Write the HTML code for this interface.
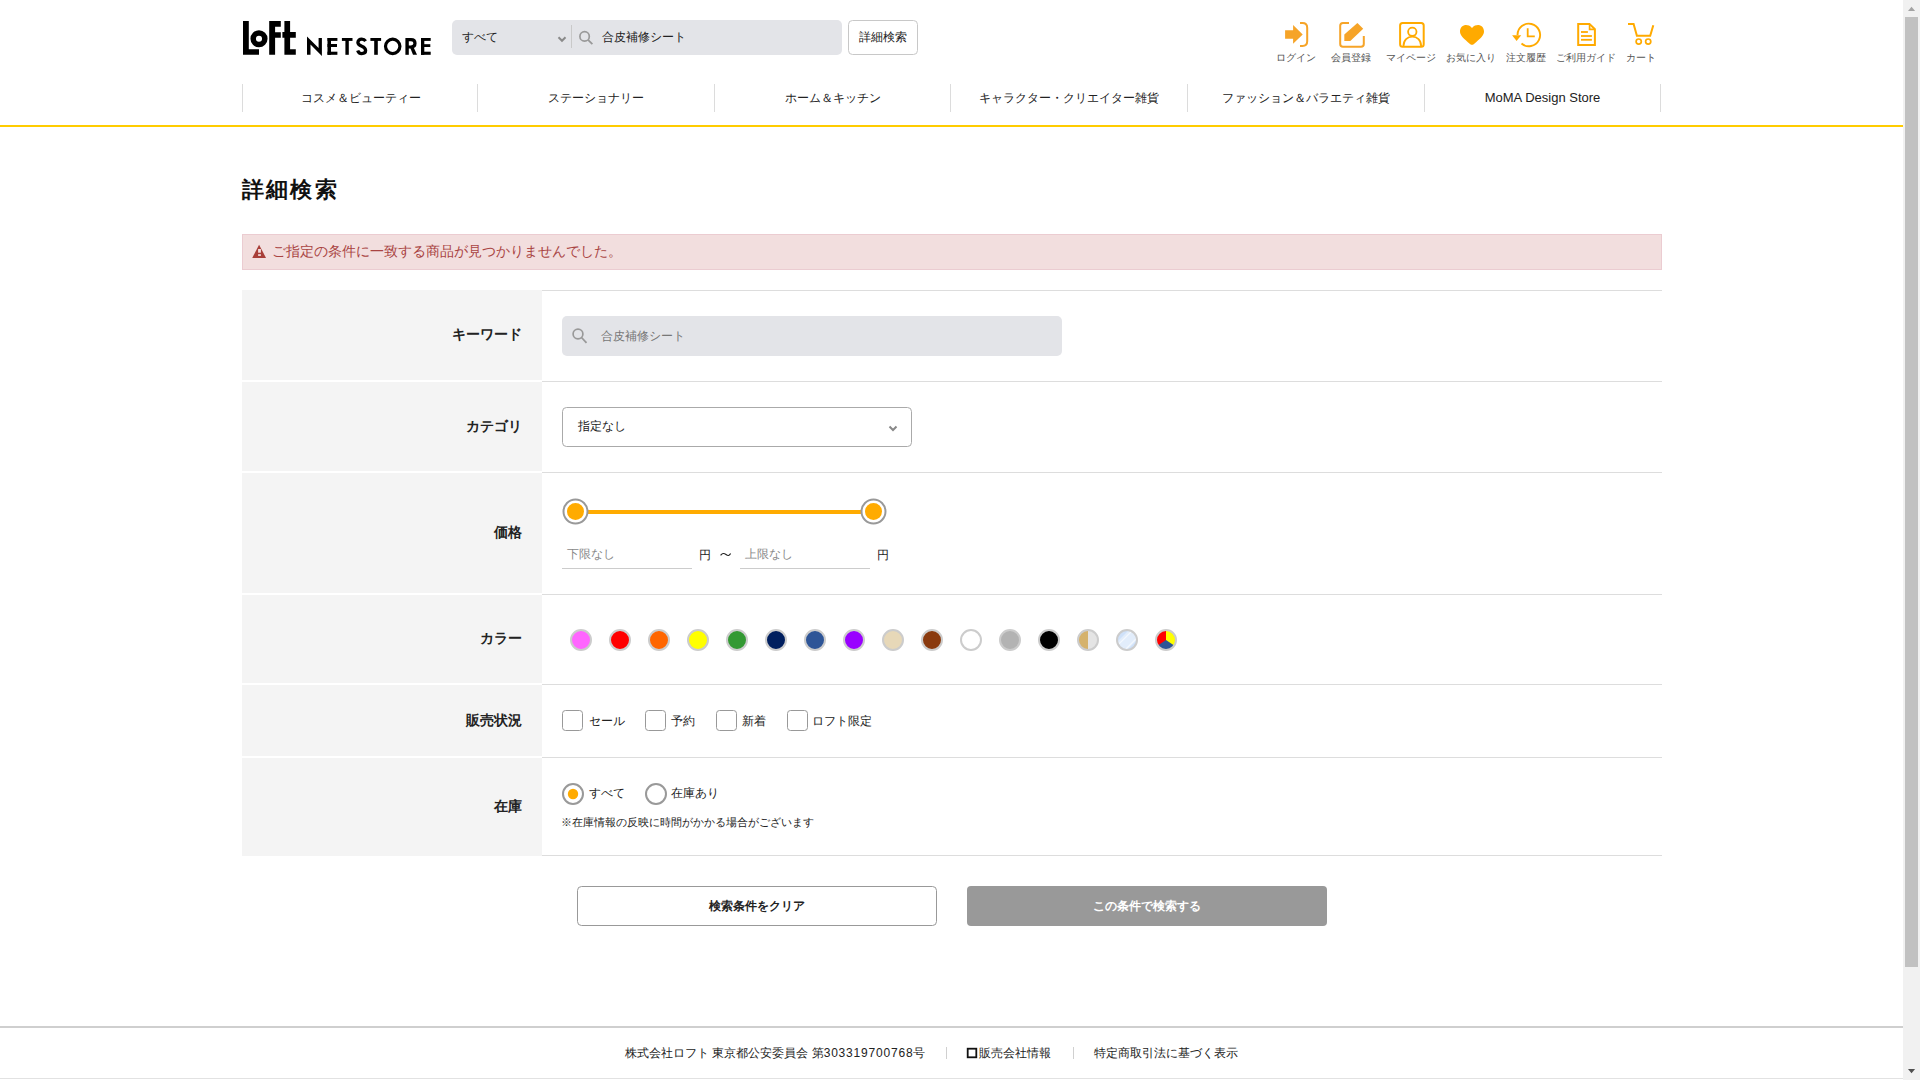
<!DOCTYPE html>
<html lang="ja">
<head>
<meta charset="utf-8">
<title>詳細検索 | ロフト公式通販サイト</title>
<style>
html,body{margin:0;padding:0;width:1920px;height:1080px;overflow:hidden;background:#fff;}
body{font-family:"Liberation Sans",sans-serif;color:#222;position:relative;}
svg.bg{position:absolute;left:0;top:0;}
.t{position:absolute;white-space:nowrap;line-height:20px;height:20px;}
.c{text-align:center;}
.r{text-align:right;}
.b{font-weight:bold;}
</style>
</head>
<body>
<svg class="bg" width="1920" height="1080" viewBox="0 0 1920 1080">
  <!-- ===== Logo ===== -->
  <g fill="#000">
    <polygon points="243,21.1 248.8,21.1 248.8,49.2 259,49.2 259,54.7 243,54.7"/>
    <circle cx="259" cy="38.8" r="5.8" fill="none" stroke="#000" stroke-width="5.5"/>
    <polygon points="269.2,21.1 280.8,21.1 280.8,26.8 275.1,26.8 275.1,32.3 280.8,32.3 280.8,37.8 275.1,37.8 275.1,54.7 269.2,54.7"/>
    <polygon points="284.4,21.1 290.1,21.1 290.1,32.1 295.8,32.1 295.8,37.8 290.1,37.8 290.1,49.2 295.8,49.2 295.8,54.7 284.4,54.7 284.4,37.8 282.4,37.8 282.4,32.1 284.4,32.1"/>
    <!-- NETSTORE -->
    <polygon points="307,54.8 307,36.4 318.6,47.9 318.6,38 321.9,38 321.9,55.9 310.5,44.6 310.5,54.8"/>
    <rect x="327.5" y="38" width="3.5" height="16.8"/>
    <rect x="327.5" y="38" width="9.9" height="2.9"/>
    <rect x="327.5" y="44" width="9.5" height="3"/>
    <rect x="327.5" y="51.7" width="9.9" height="3.1"/>
    <rect x="341.9" y="38" width="10.6" height="2.9"/>
    <rect x="345.4" y="38" width="3.4" height="16.8"/>
    <path d="M365.6,41.2 C364.6,39.6 363.2,39.1 361.7,39.1 C359.6,39.1 357.9,40.5 357.9,42.5 C357.9,44.6 359.6,45.3 361.8,46.2 C364.3,47.2 365.6,48.4 365.6,50.6 C365.6,52.7 363.8,53.6 361.7,53.6 C359.7,53.6 358.3,52.4 357.7,50.5" fill="none" stroke="#000" stroke-width="3.3"/>
    <rect x="370.4" y="38" width="10.7" height="2.9"/>
    <rect x="374.2" y="38" width="3.6" height="16.8"/>
    <circle cx="392.7" cy="46.35" r="7.2" fill="none" stroke="#000" stroke-width="3.2"/>
    <rect x="405.4" y="38" width="3.4" height="16.8"/>
    <path d="M406,39.6 L411,39.6 C413.4,39.6 415,40.9 415,43.3 C415,45.7 413.4,47 411,47 L406,47" fill="none" stroke="#000" stroke-width="3.2"/>
    <polygon points="409.5,46 413,46 417,54.8 413,54.8"/>
    <rect x="421" y="38" width="3.3" height="16.8"/>
    <rect x="421" y="38" width="9.7" height="2.9"/>
    <rect x="421" y="44.2" width="9.3" height="2.8"/>
    <rect x="421" y="51.7" width="9.7" height="3.1"/>
  </g>

  <!-- ===== Header search ===== -->
  <rect x="452" y="20" width="390" height="35" rx="5" fill="#e3e4e8"/>
  <polyline points="558.5,37.3 562,40.8 565.5,37.3" fill="none" stroke="#8a8a8a" stroke-width="2"/>
  <rect x="571" y="25" width="1" height="23" fill="#c9c9c9"/>
  <circle cx="584.6" cy="36.4" r="4.7" fill="none" stroke="#999" stroke-width="1.7"/>
  <line x1="588" y1="39.8" x2="592.4" y2="44.2" stroke="#999" stroke-width="1.8"/>
  <rect x="848.5" y="20.5" width="69" height="34" rx="4" fill="#fff" stroke="#c8c8c8"/>

  <!-- ===== Header icons ===== -->
  <g fill="#f6a428">
    <polygon points="1285.1,30.2 1293.1,30.2 1293.1,25.1 1302.7,34.5 1293.1,43.8 1293.1,38.7 1285.1,38.7"/>
  </g>
  <path d="M1300,23 L1302.5,23 Q1307.2,23 1307.2,27.7 L1307.2,41.2 Q1307.2,45.9 1302.5,45.9 L1300,45.9" fill="none" stroke="#f6a428" stroke-width="2"/>
  <path d="M1349,23 L1343,23 Q1340.2,23 1340.2,25.8 L1340.2,44 Q1340.2,46.8 1343,46.8 L1361,46.8 Q1363.8,46.8 1363.8,44 L1363.8,36" fill="none" stroke="#f6a428" stroke-width="2"/>
  <polygon points="1344.3,34.4 1357.4,23.1 1363.2,28.7 1350.3,40.9 1344.3,40.9" fill="#f6a428"/>
  <rect x="1400.1" y="23" width="23.6" height="23.8" rx="2.5" fill="none" stroke="#ffaa00" stroke-width="2"/>
  <circle cx="1412.3" cy="31.8" r="4.2" fill="none" stroke="#ffaa00" stroke-width="1.8"/>
  <path d="M1403.5,46 C1403.5,40 1407.5,36.6 1412.3,36.6 C1417.1,36.6 1421.1,40 1421.1,46" fill="none" stroke="#ffaa00" stroke-width="1.8"/>
  <path d="M1472,28 C1470,25.3 1467.5,24.8 1465.5,24.9 C1462.2,25.2 1460,28 1460,31.5 C1460,35.5 1463.5,38.5 1470.3,44.2 C1471.3,45 1472.7,45 1473.7,44.2 C1480.5,38.5 1484,35.5 1484,31.5 C1484,28 1481.8,25.2 1478.5,24.9 C1476.5,24.8 1474,25.3 1472,28 Z" fill="#ffaa00"/>
  <path d="M1517.5,34.9 A11.3,11.3 0 1 1 1521.5,43.6" fill="none" stroke="#ffaa00" stroke-width="1.9"/>
  <polygon points="1512.1,35.3 1521.2,35.3 1516.6,40.9" fill="#ffaa00"/>
  <path d="M1527.7,28.2 L1527.7,36.3 L1534.8,36.3" fill="none" stroke="#ffaa00" stroke-width="1.8"/>
  <path d="M1578.2,23.9 L1589.5,23.9 L1594.9,29.2 L1594.9,45 L1578.2,45 Z" fill="none" stroke="#ffaa00" stroke-width="2"/>
  <path d="M1589.6,24 L1589.6,29.4 L1595,29.4" fill="none" stroke="#ffaa00" stroke-width="1.7"/>
  <g fill="#ffaa00">
    <rect x="1581" y="31.1" width="6.9" height="1.8"/>
    <rect x="1581" y="35.1" width="10.9" height="1.8"/>
    <rect x="1581" y="38.9" width="10.9" height="1.8"/>
  </g>
  <path d="M1628,24 L1633.6,24 L1636.9,35.8 L1650.2,35.8 L1653.3,25.3" fill="none" stroke="#ffaa00" stroke-width="2"/>
  <circle cx="1638.7" cy="41.6" r="2.6" fill="none" stroke="#ffaa00" stroke-width="1.7"/>
  <circle cx="1648.2" cy="41.6" r="2.6" fill="none" stroke="#ffaa00" stroke-width="1.7"/>

  <!-- ===== Nav ===== -->
  <g fill="#dcdcdc">
    <rect x="242" y="84" width="1" height="28"/>
    <rect x="477" y="84" width="1" height="28"/>
    <rect x="714" y="84" width="1" height="28"/>
    <rect x="950" y="84" width="1" height="28"/>
    <rect x="1187" y="84" width="1" height="28"/>
    <rect x="1424" y="84" width="1" height="28"/>
    <rect x="1660" y="84" width="1" height="28"/>
  </g>
  <rect x="0" y="125" width="1903" height="2" fill="#ffcc00"/>

  <!-- ===== Alert ===== -->
  <rect x="242.5" y="234.5" width="1419" height="35" fill="#f2dede" stroke="#ebccd1"/>
  <path d="M259.1,244.8 L266,257.9 L252.25,257.9 Z" fill="#a83e38"/>
  <rect x="258.1" y="249" width="2.8" height="3.7" fill="#f2dede"/>
  <rect x="258.1" y="254.2" width="2.8" height="1.7" fill="#f2dede"/>

  <!-- ===== Table ===== -->
  <g fill="#f4f4f4">
    <rect x="242" y="290" width="300" height="90"/>
    <rect x="242" y="382" width="300" height="89"/>
    <rect x="242" y="473" width="300" height="120"/>
    <rect x="242" y="595" width="300" height="88"/>
    <rect x="242" y="685" width="300" height="71"/>
    <rect x="242" y="758" width="300" height="98"/>
  </g>
  <g fill="#dddddd">
    <rect x="542" y="290" width="1120" height="1"/>
    <rect x="542" y="381" width="1120" height="1"/>
    <rect x="542" y="472" width="1120" height="1"/>
    <rect x="542" y="594" width="1120" height="1"/>
    <rect x="542" y="684" width="1120" height="1"/>
    <rect x="542" y="757" width="1120" height="1"/>
    <rect x="542" y="855" width="1120" height="1"/>
  </g>

  <!-- keyword -->
  <rect x="562" y="316" width="500" height="40" rx="5" fill="#e3e4e8"/>
  <circle cx="578" cy="334" r="4.9" fill="none" stroke="#999" stroke-width="1.7"/>
  <line x1="581.5" y1="337.5" x2="586.5" y2="342.8" stroke="#999" stroke-width="1.8"/>

  <!-- category -->
  <rect x="562.5" y="407.5" width="349" height="39" rx="4" fill="#fff" stroke="#aaa"/>
  <polyline points="889.5,426.5 893,430 896.5,426.5" fill="none" stroke="#888" stroke-width="2"/>

  <!-- price slider -->
  <rect x="575" y="510" width="298" height="4" fill="#ffab00"/>
  <circle cx="575.5" cy="511.5" r="12" fill="#fff" stroke="#999" stroke-width="2"/>
  <circle cx="575.5" cy="511.5" r="8.5" fill="#ffab00"/>
  <circle cx="873.5" cy="511.5" r="12" fill="#fff" stroke="#999" stroke-width="2"/>
  <circle cx="873.5" cy="511.5" r="8.5" fill="#ffab00"/>
  <path d="M720.6,555.4 C722,553.2 724,552.9 726,554.5 C727.9,556 729.4,555.9 730.6,553.6" fill="none" stroke="#222" stroke-width="1.15"/>
  <rect x="562" y="568" width="130" height="1" fill="#ccc"/>
  <rect x="740" y="568" width="130" height="1" fill="#ccc"/>

  <!-- colors -->
  <g stroke="#cccccc" stroke-width="2">
    <circle cx="581" cy="640" r="10" fill="#ff66ff"/>
    <circle cx="620" cy="640" r="10" fill="#ff0000"/>
    <circle cx="659" cy="640" r="10" fill="#ff6600"/>
    <circle cx="698" cy="640" r="10" fill="#ffff00"/>
    <circle cx="737" cy="640" r="10" fill="#339933"/>
    <circle cx="776" cy="640" r="10" fill="#001f5f"/>
    <circle cx="815" cy="640" r="10" fill="#2e5597"/>
    <circle cx="854" cy="640" r="10" fill="#9900ff"/>
    <circle cx="893" cy="640" r="10" fill="#e7d8b8"/>
    <circle cx="932" cy="640" r="10" fill="#8a3a0e"/>
    <circle cx="971" cy="640" r="10" fill="#ffffff"/>
    <circle cx="1010" cy="640" r="10" fill="#b3b3b3"/>
    <circle cx="1049" cy="640" r="10" fill="#000000"/>
  </g>
  <defs>
    <clipPath id="c14"><circle cx="1088" cy="640" r="10"/></clipPath>
    <clipPath id="c15"><circle cx="1127" cy="640" r="10"/></clipPath>
    <clipPath id="c16"><circle cx="1166" cy="640" r="10"/></clipPath>
  </defs>
  <g clip-path="url(#c14)">
    <rect x="1076" y="628" width="12" height="24" fill="#d5b26c"/>
    <rect x="1088" y="628" width="12" height="24" fill="#e4e4e4"/>
  </g>
  <circle cx="1088" cy="640" r="10" fill="none" stroke="#ccc" stroke-width="2"/>
  <g clip-path="url(#c15)">
    <rect x="1115" y="628" width="24" height="24" fill="#cfe1f9"/>
    <polygon points="1113,646 1131,628 1141,628 1141,636 1125,652 1119,652" fill="#e2edfb"/>
    <polygon points="1116,646 1133,629 1134.2,629.6 1117.2,646.6" fill="#f3f8fe"/>
    <polygon points="1124,650 1140,634 1140.8,635 1124.8,651" fill="#f3f8fe"/>
  </g>
  <circle cx="1127" cy="640" r="10" fill="none" stroke="#ccc" stroke-width="2"/>
  <g clip-path="url(#c16)">
    <rect x="1154" y="628" width="24" height="24" fill="#2e5597"/>
    <polygon points="1166,640 1166,628 1154,628 1154,648" fill="#ff0000"/>
    <polygon points="1166,640 1166,628 1178,628 1178,648" fill="#ffff00"/>
  </g>
  <circle cx="1166" cy="640" r="10" fill="none" stroke="#ccc" stroke-width="2"/>

  <!-- checkboxes -->
  <g fill="#fff" stroke="#999" stroke-width="1">
    <rect x="562.5" y="710.5" width="20" height="20" rx="3"/>
    <rect x="645.5" y="710.5" width="20" height="20" rx="3"/>
    <rect x="716.5" y="710.5" width="20" height="20" rx="3"/>
    <rect x="787.5" y="710.5" width="20" height="20" rx="3"/>
  </g>

  <!-- radios -->
  <circle cx="573" cy="794" r="10" fill="#fff" stroke="#999" stroke-width="2"/>
  <circle cx="573" cy="794" r="5.2" fill="#ffab00"/>
  <circle cx="656" cy="794" r="10" fill="#fff" stroke="#999" stroke-width="2"/>

  <!-- buttons -->
  <rect x="577.5" y="886.5" width="359" height="39" rx="4" fill="#fff" stroke="#999"/>
  <rect x="967" y="886" width="360" height="40" rx="4" fill="#999"/>

  <!-- footer -->
  <rect x="0" y="1026" width="1903" height="2" fill="#cfcfcf"/>
  <rect x="0" y="1078" width="1903" height="1" fill="#e2e2e2"/>
  <rect x="946" y="1047" width="1" height="12" fill="#d0d0d0"/>
  <rect x="1073" y="1047" width="1" height="12" fill="#d0d0d0"/>
  <rect x="967.7" y="1048.7" width="8.6" height="8.6" fill="none" stroke="#111" stroke-width="1.8"/>

  <!-- scrollbar -->
  <rect x="1903" y="0" width="17" height="1080" fill="#f1f1f1"/>
  <rect x="1905" y="17" width="13" height="950" fill="#c1c1c1"/>
  <polygon points="1908,11.1 1915.1,11.1 1911.55,6.7" fill="#a3a3a3"/>
  <polygon points="1908,1068.9 1915.1,1068.9 1911.55,1073.3" fill="#505050"/>
</svg>

<!-- ===== Header texts ===== -->
<div class="t" style="left:462px;top:27px;font-size:12px;">すべて</div>
<div class="t" style="left:602px;top:27px;font-size:12px;">合皮補修シート</div>
<div class="t c" style="left:848px;top:27px;width:70px;font-size:12px;">詳細検索</div>

<div class="t c" style="left:1256px;top:48px;width:80px;font-size:10px;color:#555;">ログイン</div>
<div class="t c" style="left:1311px;top:48px;width:80px;font-size:10px;color:#555;">会員登録</div>
<div class="t c" style="left:1371px;top:48px;width:80px;font-size:10px;color:#555;">マイページ</div>
<div class="t c" style="left:1431px;top:48px;width:80px;font-size:10px;color:#555;">お気に入り</div>
<div class="t c" style="left:1486px;top:48px;width:80px;font-size:10px;color:#555;">注文履歴</div>
<div class="t c" style="left:1546px;top:48px;width:80px;font-size:10px;color:#555;">ご利用ガイド</div>
<div class="t c" style="left:1601px;top:48px;width:80px;font-size:10px;color:#555;">カート</div>

<div class="t c" style="left:243px;top:88px;width:235px;font-size:12px;">コスメ＆ビューティー</div>
<div class="t c" style="left:478px;top:88px;width:236px;font-size:12px;">ステーショナリー</div>
<div class="t c" style="left:715px;top:88px;width:235px;font-size:12px;">ホーム＆キッチン</div>
<div class="t c" style="left:951px;top:88px;width:236px;font-size:12px;">キャラクター・クリエイター雑貨</div>
<div class="t c" style="left:1188px;top:88px;width:236px;font-size:12px;">ファッション＆バラエティ雑貨</div>
<div class="t c" style="left:1425px;top:88px;width:235px;font-size:13px;">MoMA Design Store</div>

<!-- ===== Main ===== -->
<div class="t b" style="left:242px;top:170px;height:40px;line-height:40px;font-size:22px;letter-spacing:2.2px;color:#111;">詳細検索</div>
<div class="t" style="left:272px;top:241px;font-size:14px;color:#a94442;">ご指定の条件に一致する商品が見つかりませんでした。</div>

<div class="t r b" style="left:242px;width:280px;top:324px;font-size:14px;">キーワード</div>
<div class="t r b" style="left:242px;width:280px;top:416px;font-size:14px;">カテゴリ</div>
<div class="t r b" style="left:242px;width:280px;top:522px;font-size:14px;">価格</div>
<div class="t r b" style="left:242px;width:280px;top:628px;font-size:14px;">カラー</div>
<div class="t r b" style="left:242px;width:280px;top:710px;font-size:14px;">販売状況</div>
<div class="t r b" style="left:242px;width:280px;top:796px;font-size:14px;">在庫</div>

<div class="t" style="left:601px;top:326px;font-size:12px;color:#777;">合皮補修シート</div>
<div class="t" style="left:578px;top:416px;font-size:12px;">指定なし</div>

<div class="t" style="left:567px;top:544px;font-size:12px;color:#888;">下限なし</div>
<div class="t" style="left:699px;top:545px;font-size:12px;">円</div>
<div class="t" style="left:745px;top:544px;font-size:12px;color:#888;">上限なし</div>
<div class="t" style="left:877px;top:545px;font-size:12px;">円</div>

<div class="t" style="left:589px;top:711px;font-size:12px;">セール</div>
<div class="t" style="left:671px;top:711px;font-size:12px;">予約</div>
<div class="t" style="left:742px;top:711px;font-size:12px;">新着</div>
<div class="t" style="left:812px;top:711px;font-size:12px;">ロフト限定</div>

<div class="t" style="left:589px;top:783px;font-size:12px;">すべて</div>
<div class="t" style="left:671px;top:783px;font-size:12px;">在庫あり</div>
<div class="t" style="left:561px;top:812px;font-size:11px;">※在庫情報の反映に時間がかかる場合がございます</div>

<div class="t c b" style="left:577px;top:896px;width:360px;font-size:12px;color:#222;">検索条件をクリア</div>
<div class="t c b" style="left:967px;top:896px;width:360px;font-size:12px;color:#fff;">この条件で検索する</div>

<!-- ===== Footer ===== -->
<div class="t" style="left:625px;top:1043px;font-size:12px;">株式会社ロフト 東京都公安委員会 第<span style="letter-spacing:0.8px">303319700768</span>号</div>
<div class="t" style="left:979px;top:1043px;font-size:12px;">販売会社情報</div>
<div class="t" style="left:1094px;top:1043px;font-size:12px;">特定商取引法に基づく表示</div>
</body>
</html>
